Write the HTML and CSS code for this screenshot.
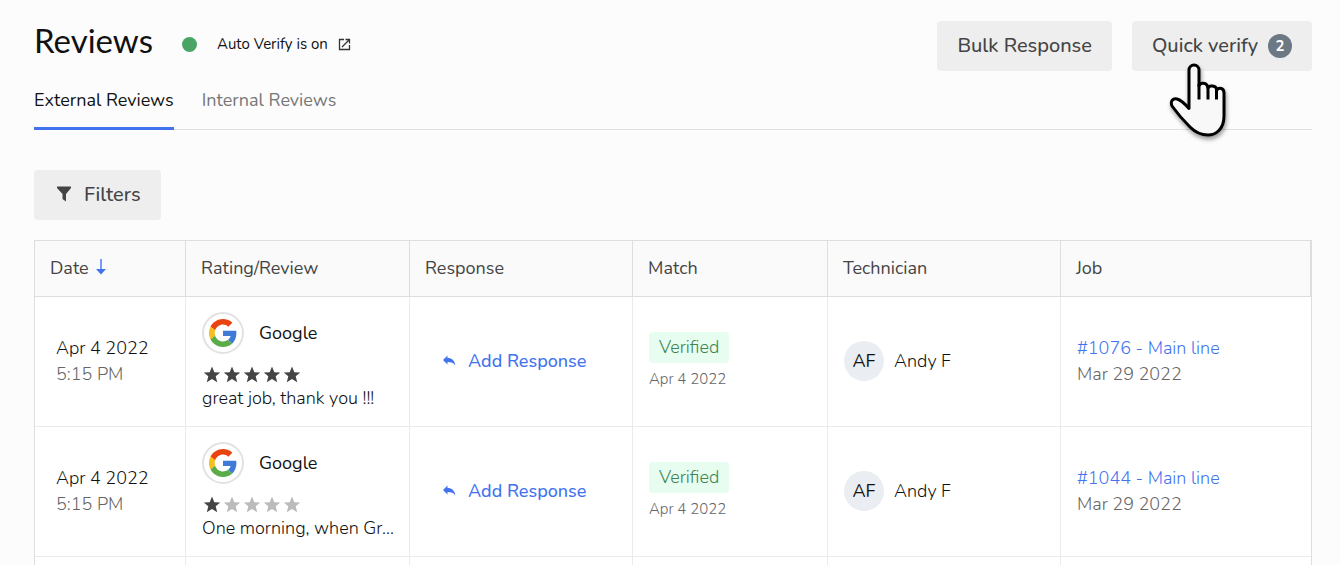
FILE: index.html
```html
<!DOCTYPE html>
<html lang="en">
<head>
    <meta charset="UTF-8">
    <meta name="viewport" content="width=device-width, initial-scale=1.0">
    <title>Reviews</title>
    <link rel="stylesheet" href="styles.css">
</head>
<body>
    <!-- shared icons -->
    <svg class="icon-defs" aria-hidden="true">
        <symbol id="star" viewBox="0 0 20 20">
            <path d="M10 1.500l2.300 5.700 5.900.300-4.500 3.800 1.500 6L10 14l-5.200 3.300 1.500-6-4.500-3.800 5.900-.300z"/>
        </symbol>
        <symbol id="google" viewBox="0 0 48 48">
            <path fill="#ea4312" d="M24 9.500c3.540 0 6.710 1.220 9.210 3.600l6.850-6.850C35.900 2.380 30.470 0 24 0 14.620 0 6.510 5.380 2.560 13.220l7.980 6.190C12.430 13.720 17.740 9.500 24 9.500z"/>
            <path fill="#3f7ad6" d="M46.980 24.550c0-1.570-.150-3.090-.380-4.550H24v9.020h12.940c-.580 2.960-2.260 5.480-4.780 7.180l7.730 6c4.510-4.180 7.090-10.360 7.090-17.650z"/>
            <path fill="#f5bf20" d="M10.530 28.590c-.480-1.450-.760-2.990-.760-4.590s.270-3.140.760-4.590l-7.980-6.190C.920 16.460 0 20.120 0 24s.920 7.540 2.560 10.780l7.970-6.190z"/>
            <path fill="#5bab48" d="M24 48c6.480 0 11.930-2.130 15.890-5.810l-7.730-6c-2.150 1.450-4.920 2.300-8.160 2.300-6.260 0-11.570-4.220-13.470-9.910l-7.980 6.190C6.510 42.620 14.620 48 24 48z"/>
        </symbol>
        <symbol id="reply" viewBox="0 0 14 12">
            <path d="M1 5L5.500 .500v2.500C10 3 12.800 5.500 13.300 10.500 11.500 7.800 9.500 7 5.500 7v2.500z"/>
        </symbol>
    </svg>

    <main class="page">
        <header class="page-header">
            <h1>Reviews</h1>
            <span class="status-dot"></span>
            <a class="auto-verify" href="#">
                Auto Verify is on
                <svg width="13" height="13" viewBox="0 0 13 13" fill="none" stroke="#333" stroke-width="1.300">
                    <path d="M6 1.500H1.500v10h10V7"/>
                    <path d="M7.500 1.500h4v4M11.500 1.500L4 9"/>
                </svg>
            </a>
            <div class="header-actions">
                <button class="btn" type="button">Bulk Response</button>
                <button class="btn btn-verify" type="button">
                    Quick verify
                    <span class="badge">2</span>
                    <svg class="pointer" width="70" height="80" viewBox="0 0 70 80">
                        <path fill="#f8f8f8" stroke="#000" stroke-width="3" stroke-linejoin="round" d="M25 48.500V10a5 5 0 0 1 10 0v16c1-4 8-4 9 2 1-3 8-3 9 2 2-3 7-2 7 3v23c0 14-9 19-16 19-8 0-13-3-18-8C19 60 13 53 8 46c-2-5 1-8 5-7 4 1 8 5 12 9.500z"/>
                        <path fill="none" stroke="#000" stroke-width="3" d="M35 24v15.500M44 27v12.500M52.500 29v10.500"/>
                    </svg>
                </button>
            </div>
        </header>

        <nav class="tabs">
            <a class="tab active" href="#">External Reviews</a>
            <a class="tab" href="#">Internal Reviews</a>
        </nav>

        <button class="btn btn-filters" type="button">
            <svg width="14" height="16" viewBox="0 0 14 16" fill="#444">
                <path d="M0 .500h14v1.500L9 8v7.500L5.500 13V8L0 2z"/>
            </svg>
            Filters
        </button>

        <table class="reviews">
            <colgroup>
                <col class="col-date">
                <col class="col-rating">
                <col class="col-response">
                <col class="col-match">
                <col class="col-technician">
                <col>
            </colgroup>
            <thead>
                <tr>
                    <th>
                        Date
                        <svg class="sort" width="12" height="16" viewBox="0 0 12 16">
                            <path fill="#4272ee" d="M5.300 0h1.400v10H11l-5 5.500L1 10h4.300z"/>
                        </svg>
                    </th>
                    <th>Rating/Review</th>
                    <th>Response</th>
                    <th>Match</th>
                    <th>Technician</th>
                    <th>Job</th>
                </tr>
            </thead>
            <tbody>
                <tr>
                    <td class="date">
                        <div>Apr 4 2022</div>
                        <div class="muted">5:15 PM</div>
                    </td>
                    <td class="stacked">
                        <div class="source">
                            <span class="source-logo"><svg width="28" height="28"><use href="#google"/></svg></span>
                            Google
                        </div>
                        <div class="stars">
                            <svg><use href="#star"/></svg>
                            <svg><use href="#star"/></svg>
                            <svg><use href="#star"/></svg>
                            <svg><use href="#star"/></svg>
                            <svg><use href="#star"/></svg>
                        </div>
                        <div class="review-text">great job, thank you !!!</div>
                    </td>
                    <td>
                        <button class="add-response" type="button">
                            <svg width="14" height="12"><use href="#reply"/></svg>
                            Add Response
                        </button>
                    </td>
                    <td class="stacked">
                        <span class="verified">Verified</span>
                        <div class="match-date">Apr 4 2022</div>
                    </td>
                    <td>
                        <div class="technician"><span class="avatar">AF</span>Andy F</div>
                    </td>
                    <td>
                        <div><a href="#">#1076 - Main line</a></div>
                        <div class="muted">Mar 29 2022</div>
                    </td>
                </tr>
                <tr>
                    <td class="date">
                        <div>Apr 4 2022</div>
                        <div class="muted">5:15 PM</div>
                    </td>
                    <td class="stacked">
                        <div class="source">
                            <span class="source-logo"><svg width="28" height="28"><use href="#google"/></svg></span>
                            Google
                        </div>
                        <div class="stars">
                            <svg><use href="#star"/></svg>
                            <svg class="off"><use href="#star"/></svg>
                            <svg class="off"><use href="#star"/></svg>
                            <svg class="off"><use href="#star"/></svg>
                            <svg class="off"><use href="#star"/></svg>
                        </div>
                        <div class="review-text">One morning, when Gr...</div>
                    </td>
                    <td>
                        <button class="add-response" type="button">
                            <svg width="14" height="12"><use href="#reply"/></svg>
                            Add Response
                        </button>
                    </td>
                    <td class="stacked">
                        <span class="verified">Verified</span>
                        <div class="match-date">Apr 4 2022</div>
                    </td>
                    <td>
                        <div class="technician"><span class="avatar">AF</span>Andy F</div>
                    </td>
                    <td>
                        <div><a href="#">#1044 - Main line</a></div>
                        <div class="muted">Mar 29 2022</div>
                    </td>
                </tr>
                <tr>
                    <td></td>
                    <td></td>
                    <td></td>
                    <td></td>
                    <td></td>
                    <td></td>
                </tr>
            </tbody>
        </table>
    </main>
</body>
</html>
```

FILE: styles.css
```css
* {
    box-sizing: border-box;
}

body {
    margin: 0;
    background-color: #fcfcfc;
    color: #111;
    font-family: Nunito, Lato, sans-serif;
    font-size: 18px;
    line-height: 26px;
}

button {
    font-family: inherit;
    cursor: pointer;
}

a {
    color: #4272ee;
    text-decoration: none;
}

.icon-defs {
    display: none;
}

.page {
    height: 100vh;
    overflow: hidden;
    padding: 21px 28px 0 34px;
}

/* header */
.page-header {
    display: flex;
    align-items: flex-start;
}

h1 {
    margin: 0;
    font-family: "Sofia Pro", Lato, sans-serif;
    font-size: 33px;
    font-weight: 400;
    line-height: 38px;
}

.status-dot {
    width: 15px;
    height: 15px;
    margin: 16px 20px 0 29px;
    border-radius: 50%;
    background-color: #4aa564;
}

.auto-verify {
    display: flex;
    align-items: center;
    gap: 10px;
    margin-top: 10px;
    color: #111;
    font-size: 15px;
}

.header-actions {
    display: flex;
    gap: 20px;
    margin-left: auto;
}

.btn {
    display: flex;
    align-items: center;
    height: 50px;
    padding: 0 20px 2px;
    border: none;
    border-radius: 4px;
    background-color: #eee;
    color: #444;
    font-size: 20px;
    font-weight: 500;
}

.btn-verify {
    position: relative;
    gap: 10px;
}

.badge {
    width: 24px;
    height: 24px;
    margin-top: 2px;
    border-radius: 50%;
    background-color: #6c7884;
    color: #fff;
    font-size: 15px;
    font-weight: 700;
    line-height: 24px;
}

.pointer {
    position: absolute;
    top: 39px;
    left: 32px;
    filter: drop-shadow(1px 3px 2px rgba(0, 0, 0, 0.4));
}

/* tabs */
.tabs {
    display: flex;
    gap: 28px;
    margin-top: 16px;
    border-bottom: 1px solid #e0e0e0;
}

.tab {
    height: 43px;
    margin-bottom: -1px;
    border-bottom: 3px solid transparent;
    color: #777;
}

.tab.active {
    color: #111;
    border-color: #4272ee;
}

.btn-filters {
    gap: 13px;
    margin: 40px 0 20px;
    padding-left: 23px;
}

/* table */
.reviews {
    width: 100%;
    table-layout: fixed;
    border-collapse: separate;
    border-spacing: 0;
    border: 1px solid #dedede;
    background-color: #fff;
}

.col-date {
    width: 151px;
}

.col-rating {
    width: 224px;
}

.col-response {
    width: 223px;
}

.col-match {
    width: 195px;
}

.col-technician {
    width: 233px;
}

th {
    height: 56px;
    padding: 0 15px 2px;
    border-right: 1px solid #dedede;
    border-bottom: 1px solid #dedede;
    background-color: #fafafa;
    color: #444;
    font-weight: 400;
    text-align: left;
}

td {
    height: 130px;
    padding: 0 16px 2px;
    border-right: 1px solid #ebebeb;
    border-bottom: 1px solid #ebebeb;
    font-weight: 300;
}

td:last-child {
    border-right: none;
}

td.date {
    padding-left: 21px;
}

td.stacked {
    padding-bottom: 0;
}

.sort {
    margin-left: 2px;
    vertical-align: -1px;
}

.muted {
    color: #666;
}

.source {
    display: flex;
    align-items: center;
    gap: 15px;
    font-weight: 400;
}

.source-logo {
    display: flex;
    align-items: center;
    justify-content: center;
    width: 42px;
    height: 42px;
    border: 2px solid #e2e2e2;
    border-radius: 50%;
}

.stars {
    display: flex;
    margin-top: 11px;
}

.stars svg {
    width: 20px;
    height: 20px;
    fill: #444;
}

.stars svg.off {
    fill: #bbb;
}

.review-text {
    white-space: nowrap;
}

.add-response {
    display: flex;
    align-items: center;
    gap: 12px;
    padding: 0 16px;
    border: none;
    background: none;
    color: #4272ee;
    font-size: 18px;
    font-weight: 500;
}

.add-response svg {
    fill: #4272ee;
}

.verified {
    display: inline-block;
    padding: 2px 10px 3px;
    border-radius: 4px;
    background-color: #e6fdf0;
    color: #3f8352;
}

.match-date {
    margin-top: 3px;
    color: #666;
    font-size: 15px;
}

.technician {
    display: flex;
    align-items: center;
    gap: 10px;
}

.avatar {
    width: 40px;
    height: 40px;
    border-radius: 50%;
    background-color: #eaeef2;
    font-weight: 400;
    line-height: 40px;
    text-align: center;
}
```
